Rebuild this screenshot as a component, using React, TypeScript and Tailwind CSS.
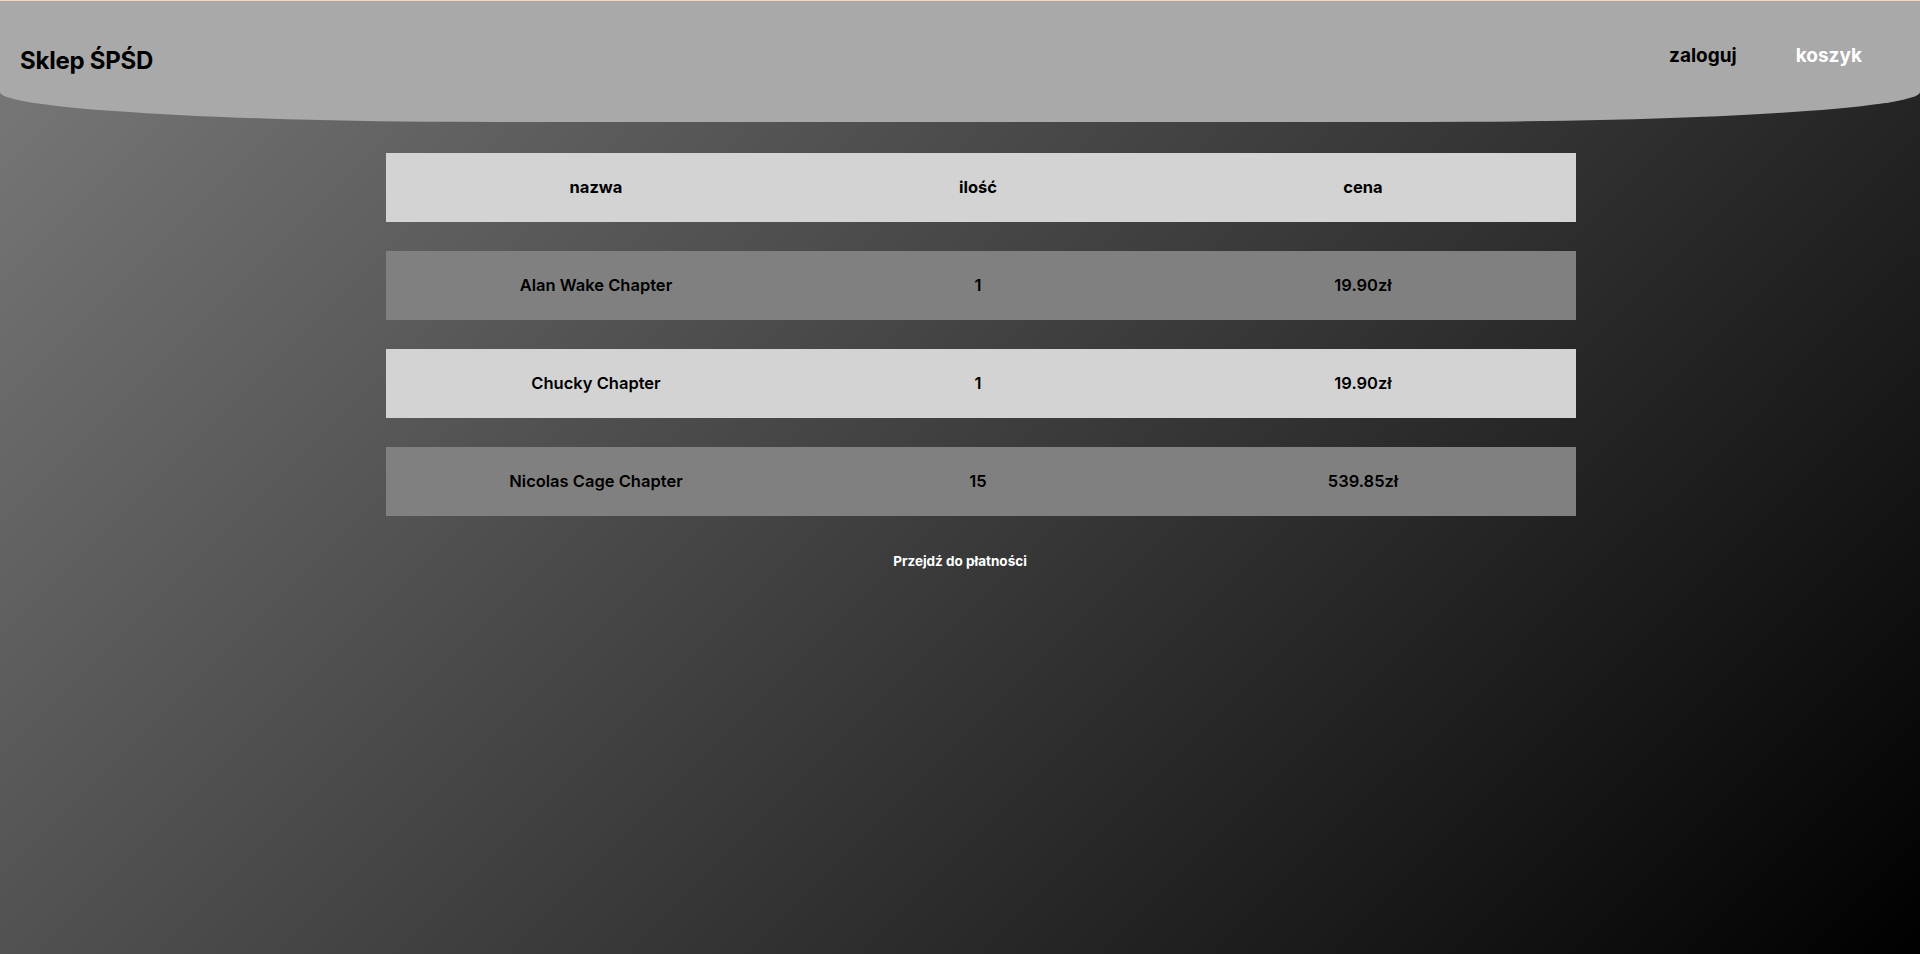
const items = [
  { name: "Alan Wake Chapter", qty: 1, price: "19.90zł" },
  { name: "Chucky Chapter", qty: 1, price: "19.90zł" },
  { name: "Nicolas Cage Chapter", qty: 15, price: "539.85zł" },
];

export default function App() {
  return (
    <div className="min-h-screen w-full bg-[linear-gradient(135deg,#7a7a7a,#000000)] font-['Inter','Liberation_Sans',sans-serif] text-black">
      <header className="flex h-[122px] items-start justify-between rounded-b-[500px_30px] border-t border-[#f2d6c2] bg-[#a9a9a9]">
        <h1 className="mt-[42px] pl-5 text-[24px] font-bold tracking-[-0.01em]">Sklep ŚPŚD</h1>
        <nav className="mt-[41px] flex gap-[59px] pr-[58px] text-[19px] font-bold">
          <a href="#" className="text-black">zaloguj</a>
          <a href="#" className="text-white">koszyk</a>
        </nav>
      </header>

      <main className="flex flex-col">
        <div className="ml-[386px] mt-[31px] flex w-[1190px] flex-col gap-[29px]">
          <div className="grid h-[69px] grid-cols-[420px_344px_426px] items-center bg-[#d3d3d3] text-center text-[16.5px] font-bold">
            <div>nazwa</div>
            <div>ilość</div>
            <div>cena</div>
          </div>
          {items.map((item, i) => (
            <div
              key={item.name}
              className={
                "grid h-[69px] grid-cols-[420px_344px_426px] items-center text-center text-[16.5px] font-semibold " +
                (i % 2 === 0 ? "bg-[#808080]" : "bg-[#d3d3d3]")
              }
            >
              <div>{item.name}</div>
              <div>{item.qty}</div>
              <div>{item.price}</div>
            </div>
          ))}
        </div>

        <div className="mt-[35px] flex justify-center">
          <button className="text-[13.5px] font-bold text-white">Przejdź do płatności</button>
        </div>
      </main>
    </div>
  );
}
